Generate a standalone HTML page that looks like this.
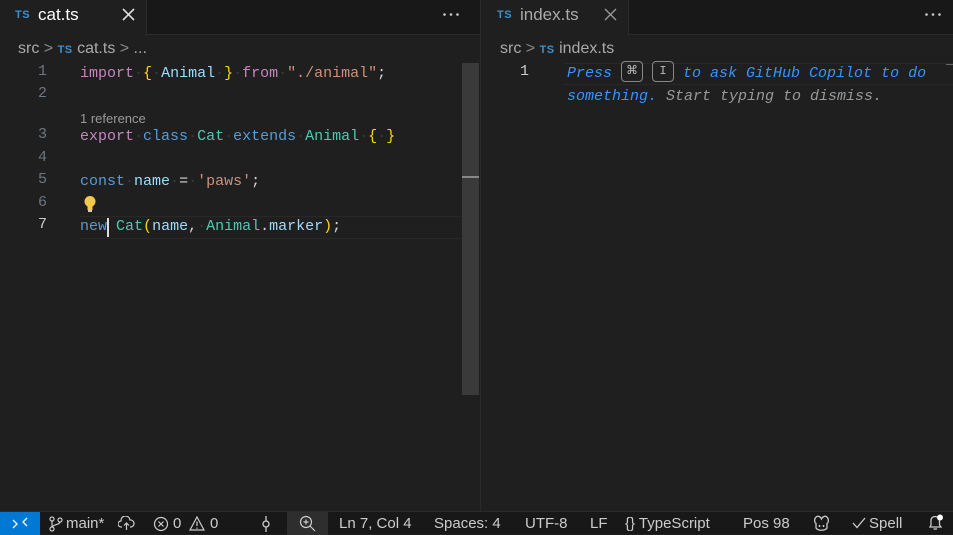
<!DOCTYPE html>
<html><head><meta charset="utf-8"><style>
*{margin:0;padding:0;box-sizing:border-box}
body{width:953px;height:534px;background:#1f1f1f;overflow:hidden;position:relative;font-family:"Liberation Sans",sans-serif;color:#ccc}
.abs{position:absolute}
.tabbar{top:0;height:35px;background:#181818;border-bottom:1px solid #2b2b2b}
.tab{top:0;height:36px;background:#1f1f1f;border-right:1px solid #2b2b2b}
.ts{color:#3f8fc9;font-size:11px;font-weight:bold;letter-spacing:.5px}
.code{font-family:"Liberation Mono",monospace;font-size:15px;white-space:pre;line-height:22px}
.ln{font-family:"Liberation Mono",monospace;font-size:15px;color:#6e7681;text-align:right;width:20px}
.k{color:#c586c0}.b{color:#569cd6}.t{color:#4ec9b0}.v{color:#9cdcfe}.s{color:#ce9178}.y{color:#ffd700}.d{color:#d4d4d4}
.dot{color:#3c3c3c}
.sb{top:511px;height:23px;left:0;width:953px;background:#181818;border-top:1px solid #2b2b2b;font-size:15px;color:#ccc}
.sb span{position:absolute;top:3px;white-space:nowrap}
.sb svg{position:absolute}
.key{display:inline-block;border:1px solid #888;border-radius:4px;width:22px;height:21px;text-align:center;line-height:19px;font-style:normal;color:#bbb;font-size:12px;vertical-align:middle;margin-top:-3px}
</style></head><body>
<div class="abs tabbar" style="left:0;width:953px"></div>
<div class="abs tab" style="left:0;width:147px"></div>
<div class="abs tab" style="left:481px;width:148px"></div>
<div class="abs" style="left:480px;top:0;width:1px;height:511px;background:#2b2b2b"></div>
<span class="abs ts" style="left:15px;top:9px">TS</span>
<span class="abs" style="left:38px;top:5px;font-size:17px;color:#fff">cat.ts</span>
<svg class="abs" style="left:122px;top:8px" width="13" height="13" viewBox="0 0 13 13"><path d="M1 1L12 12M12 1L1 12" stroke="#ddd" stroke-width="1.6"/></svg>
<svg class="abs" style="left:443px;top:13px" width="16" height="3"><circle cx="1.5" cy="1.5" r="1.3" fill="#ccc"/><circle cx="8" cy="1.5" r="1.3" fill="#ccc"/><circle cx="14.5" cy="1.5" r="1.3" fill="#ccc"/></svg>
<span class="abs ts" style="left:497px;top:9px">TS</span>
<span class="abs" style="left:520px;top:5px;font-size:17px;color:#aaa">index.ts</span>
<svg class="abs" style="left:604px;top:8px" width="13" height="13" viewBox="0 0 13 13"><path d="M1 1L12 12M12 1L1 12" stroke="#999" stroke-width="1.4"/></svg>
<svg class="abs" style="left:925px;top:13px" width="16" height="3"><circle cx="1.5" cy="1.5" r="1.3" fill="#ccc"/><circle cx="8" cy="1.5" r="1.3" fill="#ccc"/><circle cx="14.5" cy="1.5" r="1.3" fill="#ccc"/></svg>

<span class="abs" style="left:18px;top:40px;font-size:16px;color:#aaa">src <span style="color:#888">&gt;</span> <span class="ts" style="font-size:11px">TS</span> cat.ts <span style="color:#888">&gt;</span> ...</span>
<span class="abs" style="left:500px;top:40px;font-size:16px;color:#aaa">src <span style="color:#888">&gt;</span> <span class="ts" style="font-size:11px">TS</span> index.ts</span>

<div class="abs ln" style="left:27px;top:63px">1</div>
<div class="abs ln" style="left:27px;top:85px">2</div>
<div class="abs ln" style="left:27px;top:126px">3</div>
<div class="abs ln" style="left:27px;top:149px">4</div>
<div class="abs ln" style="left:27px;top:171px">5</div>
<div class="abs ln" style="left:27px;top:194px">6</div>
<div class="abs ln" style="left:27px;top:216px;color:#ccc">7</div>

<div class="abs code" style="left:80px;top:63px"><span class="k">import</span><span class="dot">·</span><span class="y">{</span><span class="dot">·</span><span class="v">Animal</span><span class="dot">·</span><span class="y">}</span><span class="dot">·</span><span class="k">from</span><span class="dot">·</span><span class="s">"./animal"</span><span class="d">;</span></div>
<div class="abs" style="left:80px;top:111px;font-size:13px;color:#999">1 reference</div>
<div class="abs code" style="left:80px;top:126px"><span class="k">export</span><span class="dot">·</span><span class="b">class</span><span class="dot">·</span><span class="t">Cat</span><span class="dot">·</span><span class="b">extends</span><span class="dot">·</span><span class="t">Animal</span><span class="dot">·</span><span class="y">{</span><span class="dot">·</span><span class="y">}</span></div>
<div class="abs code" style="left:80px;top:171px"><span class="b">const</span><span class="dot">·</span><span class="v">name</span><span class="dot">·</span><span class="d">=</span><span class="dot">·</span><span class="s">'paws'</span><span class="d">;</span></div>
<svg class="abs" style="left:83px;top:195px" width="14" height="18" viewBox="0 0 14 18"><circle cx="7" cy="6.5" r="5.5" fill="#f2c94c"/><rect x="4.5" y="10" width="5" height="5" fill="#f2c94c"/><rect x="5" y="15" width="4" height="2" fill="#ccc"/></svg>
<div class="abs" style="left:80px;top:216px;width:382px;height:23px;border-top:1px solid #282828;border-bottom:1px solid #282828"></div>
<div class="abs code" style="left:80px;top:216px"><span class="b">new</span><span class="d"> </span><span class="t">Cat</span><span class="y">(</span><span class="v">name</span><span class="d">,</span><span class="dot">·</span><span class="t">Animal</span><span class="d">.</span><span class="v">marker</span><span class="y">)</span><span class="d">;</span></div>
<div class="abs" style="left:107px;top:218px;width:2px;height:19px;background:#ddd"></div>

<div class="abs" style="left:462px;top:63px;width:17px;height:332px;background:#3a3a3a"></div>
<div class="abs" style="left:462px;top:176px;width:17px;height:2px;background:#888"></div>
<div class="abs" style="left:946px;top:63px;width:7px;height:2px;background:#666"></div>

<div class="abs ln" style="left:509px;top:63px;color:#ccc">1</div>
<div class="abs" style="left:563px;top:63px;width:390px;height:22px;border-top:1px solid #282828;border-bottom:1px solid #282828"></div>
<div class="abs code" style="left:567px;top:63px;font-style:italic;color:#3794ff">Press <span class="key">⌘</span> <span class="key">I</span> to ask GitHub Copilot to do</div>
<div class="abs code" style="left:567px;top:86px;font-style:italic"><span style="color:#3794ff">something.</span><span style="color:#999"> Start typing to dismiss.</span></div>

<div class="abs sb">
<div class="abs" style="left:0;top:0;width:40px;height:23px;background:#0078d4"></div>
<svg style="left:12px;top:5px" width="16" height="13" viewBox="0 0 16 13"><path d="M1 3L5 7L1 11M15 1L11 5L15 9" stroke="#fff" stroke-width="1.3" fill="none"/></svg>
<svg style="left:49px;top:4px" width="14" height="16" viewBox="0 0 14 16"><circle cx="3" cy="3" r="2" stroke="#ccc" fill="none" stroke-width="1.2"/><circle cx="3" cy="13" r="2" stroke="#ccc" fill="none" stroke-width="1.2"/><circle cx="11" cy="4" r="2" stroke="#ccc" fill="none" stroke-width="1.2"/><path d="M3 5V11M11 6C11 9 4 8 3.5 11" stroke="#ccc" fill="none" stroke-width="1.2"/></svg>
<span style="left:66px">main*</span>
<svg style="left:118px;top:4px" width="17" height="15" viewBox="0 0 17 15"><path d="M4 11H3A3 3 0 0 1 3 5A4.5 4.5 0 0 1 12 4A3.5 3.5 0 0 1 13 11H12" stroke="#ccc" fill="none" stroke-width="1.2"/><path d="M8.5 14V7M6 9.5L8.5 7L11 9.5" stroke="#ccc" fill="none" stroke-width="1.2"/></svg>
<svg style="left:153px;top:4px" width="16" height="16" viewBox="0 0 16 16"><circle cx="8" cy="8" r="6.5" stroke="#ccc" fill="none" stroke-width="1.2"/><path d="M5.5 5.5L10.5 10.5M10.5 5.5L5.5 10.5" stroke="#ccc" stroke-width="1.2"/></svg>
<span style="left:173px">0</span>
<svg style="left:189px;top:4px" width="16" height="15" viewBox="0 0 16 15"><path d="M8 1L15 14H1Z" stroke="#ccc" fill="none" stroke-width="1.2"/><path d="M8 5.5V10M8 11.5V12.8" stroke="#ccc" stroke-width="1.2"/></svg>
<span style="left:210px">0</span>
<svg style="left:261px;top:3px" width="10" height="18" viewBox="0 0 10 18"><circle cx="5" cy="9" r="3" stroke="#ccc" fill="none" stroke-width="1.3"/><path d="M5 1V6M5 12V17" stroke="#ccc" stroke-width="1.3"/></svg>
<div class="abs" style="left:287px;top:0;width:41px;height:23px;background:#2e2e2e"></div>
<svg style="left:299px;top:3px" width="17" height="17" viewBox="0 0 17 17"><circle cx="7" cy="7" r="5.5" stroke="#ccc" fill="none" stroke-width="1.2"/><path d="M11 11L16 16M4.5 7H9.5M7 4.5V9.5" stroke="#ccc" stroke-width="1.2"/></svg>
<span style="left:339px">Ln 7, Col 4</span>
<span style="left:434px">Spaces: 4</span>
<span style="left:525px">UTF-8</span>
<span style="left:590px">LF</span>
<span style="left:625px">{} TypeScript</span>
<span style="left:743px">Pos 98</span>
<svg style="left:812px;top:3px" width="19" height="17" viewBox="0 0 19 17"><path d="M3 3.5C5 0 8 1 9.5 4C11 1 14 0 16 3.5C17 6 16 8 15 8.5V13C13 16 6 16 4 13V8.5C3 8 2 6 3 3.5Z" stroke="#ccc" fill="none" stroke-width="1.3"/><path d="M7.5 10V12M11.5 10V12" stroke="#ccc" stroke-width="1.5"/></svg>
<svg style="left:852px;top:5px" width="14" height="12" viewBox="0 0 14 12"><path d="M1 6L5 10.5L13 1" stroke="#ccc" fill="none" stroke-width="1.3"/></svg>
<span style="left:869px">Spell</span>
<svg style="left:927px;top:2px" width="17" height="18" viewBox="0 0 17 18"><path d="M3 13H14L12.5 11V7A4.5 4.5 0 0 0 8 2.5A4 4 0 0 0 4 7V11Z" stroke="#ccc" fill="none" stroke-width="1.3"/><path d="M6.5 15H10" stroke="#ccc" stroke-width="1.3"/><circle cx="13" cy="3.5" r="3" fill="#fff"/></svg>
</div>
</body></html>
